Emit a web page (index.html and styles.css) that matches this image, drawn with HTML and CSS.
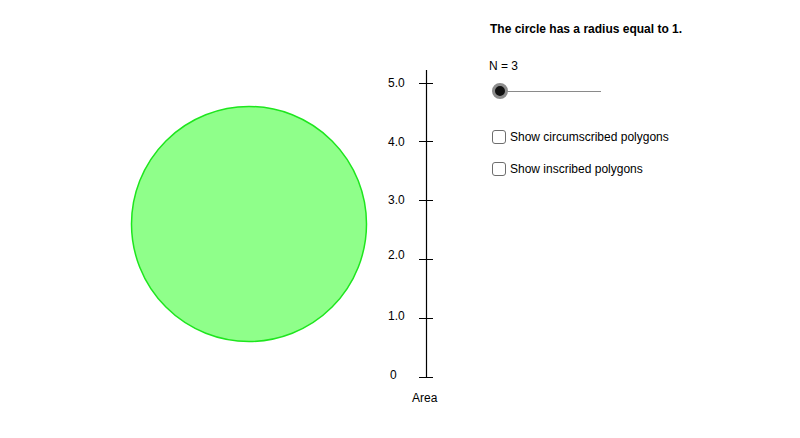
FILE: index.html
```html
<!DOCTYPE html>
<html>
<head>
<meta charset="utf-8">
<link rel="stylesheet" href="styles.css">
</head>
<body>
<div class="applet">
  <svg class="canvas" width="800" height="438" viewBox="0 0 800 438">
    <circle cx="249" cy="224" r="117.5" fill="#8fff8a" stroke="#1ee61e" stroke-width="1.5"/>
    <line x1="426.5" y1="70" x2="426.5" y2="377.5" stroke="#000" stroke-width="1.2"/>
    <g stroke="#000" stroke-width="1">
      <line x1="419" y1="83.5" x2="433" y2="83.5"/>
      <line x1="419" y1="141.5" x2="433" y2="141.5"/>
      <line x1="419" y1="200.5" x2="433" y2="200.5"/>
      <line x1="419" y1="259.5" x2="433" y2="259.5"/>
      <line x1="419" y1="318.5" x2="433" y2="318.5"/>
      <line x1="419" y1="377.5" x2="433" y2="377.5"/>
    </g>
    <g class="lbl">
      <text x="388" y="87">5.0</text>
      <text x="388" y="146">4.0</text>
      <text x="388" y="204">3.0</text>
      <text x="388" y="259">2.0</text>
      <text x="388" y="320">1.0</text>
      <text x="390" y="379">0</text>
      <text x="412" y="402">Area</text>
    </g>
  </svg>
  <div class="panel">
    <div class="title">The circle has a radius equal to 1.</div>
    <div class="slider-label">N = 3</div>
    <div class="slider">
      <div class="track"></div>
      <div class="knob"></div>
    </div>
    <label class="check first"><span class="box"></span><span>Show circumscribed polygons</span></label>
    <label class="check second"><span class="box"></span><span>Show inscribed polygons</span></label>
  </div>
</div>
</body>
</html>
```

FILE: styles.css
```css
html, body {
  margin: 0;
  padding: 0;
  background: #fff;
}
body {
  font-family: "Liberation Sans", Arial, sans-serif;
  color: #000;
}
.applet {
  position: relative;
  width: 800px;
  height: 438px;
  overflow: hidden;
}
.canvas {
  display: block;
}
.lbl text {
  font-family: "Liberation Sans", Arial, sans-serif;
  font-size: 12px;
  fill: #000;
}
.panel {
  position: absolute;
  left: 489px;
  top: 22px;
  display: flex;
  flex-direction: column;
  align-items: flex-start;
}
.title {
  font-size: 12px;
  font-weight: bold;
  line-height: 14px;
  margin-left: 1px;
}
.slider-label {
  font-size: 12px;
  line-height: 14px;
  margin-top: 23px;
}
.slider {
  position: relative;
  width: 112px;
  height: 16px;
  margin-top: 10px;
}
.track {
  position: absolute;
  left: 11px;
  right: 0;
  top: 7.5px;
  height: 1px;
  background: #8a8a8a;
}
.knob {
  position: absolute;
  left: 3px;
  top: 0;
  width: 10px;
  height: 10px;
  border-radius: 50%;
  background: #111;
  border: 3px solid #8c8c8c;
}
.check {
  display: flex;
  align-items: center;
  gap: 4px;
  font-size: 12px;
  line-height: 14px;
  margin-left: 3px;
}
.check.first {
  margin-top: 31px;
}
.check.second {
  margin-top: 18px;
}
.box {
  box-sizing: border-box;
  width: 14px;
  height: 14px;
  border: 1px solid #6e6e6e;
  border-radius: 3px;
  background: #fff;
}
```
